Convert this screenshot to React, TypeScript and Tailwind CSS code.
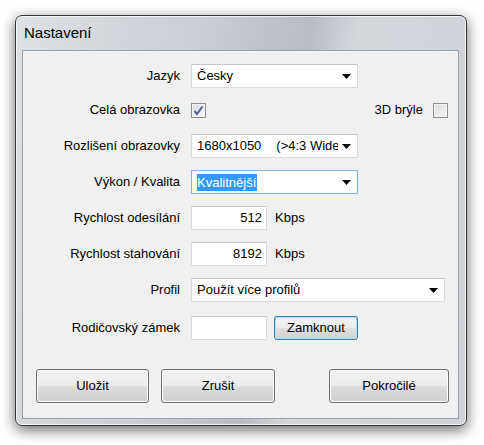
import React from 'react';

const font = { fontFamily: '"Liberation Sans", Arial, sans-serif' };

const Arrow: React.FC = () => (
  <svg width="9" height="5" viewBox="0 0 9 5" className="shrink-0">
    <path d="M0 0 H9 L4.5 5 Z" fill="#000" />
  </svg>
);

const Select: React.FC<{ w: string; focused?: boolean; children: React.ReactNode }> = ({ w, focused, children }) => (
  <div
    className={`${w} h-[24px] flex items-center bg-white border pl-[5px] pr-[6px] ${
      focused ? 'border-[#7eb4ea]' : 'border-[#d9dbdd] border-t-[#c2c6ca]'
    }`}
  >
    <div className="flex-1 overflow-hidden whitespace-nowrap flex items-center mr-[4px]">{children}</div>
    <Arrow />
  </div>
);

const Checkbox: React.FC<{ checked?: boolean }> = ({ checked }) => (
  <div className="w-[15px] h-[15px] border border-[#8f8f8f] bg-[linear-gradient(135deg,#dcdcdc,#f7f7f7)] flex items-center justify-center shadow-[inset_0_0_0_1px_#f4f4f4]">
    {checked && (
      <svg width="11" height="11" viewBox="0 0 11 11">
        <path d="M1.5 6 L4 9 L9.5 1.5" fill="none" stroke="#4a5f97" strokeWidth="2" />
      </svg>
    )}
  </div>
);

const TextBox: React.FC<{ value?: string }> = ({ value }) => (
  <div className="w-[76px] h-[24px] bg-white border border-[#d9dbdd] border-t-[#c2c6ca] flex items-center justify-end pr-[4px]">
    {value}
  </div>
);

const Button: React.FC<{ w: string; children: React.ReactNode }> = ({ w, children }) => (
  <div
    className={`${w} h-[34px] rounded-[3px] border border-[#707070] flex items-center justify-center shadow-[inset_0_0_0_1px_#fcfcfc] bg-[linear-gradient(#f2f2f2_0%,#ebebeb_50%,#dddddd_51%,#cfcfcf_100%)]`}
  >
    {children}
  </div>
);

const Row: React.FC<{ label: string; mt: string; children: React.ReactNode }> = ({ label, mt, children }) => (
  <div className={`flex items-center h-[24px] ${mt}`}>
    <div className="w-[158px] text-right pr-[1px]">{label}</div>
    <div className="ml-[10px] flex items-center flex-1">{children}</div>
  </div>
);

export default function App() {
  return (
    <div className="w-[484px] h-[445px] bg-white pt-[15px] pl-[15px]" style={font}>
      <div className="w-[452px] h-[411px] rounded-[7px] border border-[#34373a] pl-[6px] pr-[7px] pb-[6px] shadow-[0_4px_14px_rgba(0,0,0,0.6),inset_0_0_0_1px_rgba(255,255,255,0.7)] bg-[linear-gradient(100deg,#dde1e5_0%,#c9cfd5_35%,#b7bdc3_57%,#d3d8dd_66%,#cdd3d8_100%)]">
        <div className="h-[34px] flex items-center pl-[2px] pt-[1px] text-[15px] text-black">Nastavení</div>
        <div className="w-[437px] h-[369px] border border-[#98a1a9] bg-[#f0f0f0] text-[13px] text-black pt-[13px]">
          <Row label="Jazyk" mt="">
            <Select w="w-[167px]">Česky</Select>
          </Row>
          <Row label="Celá obrazovka" mt="mt-[10px]">
            <Checkbox checked />
            <div className="ml-auto mr-[10px] flex items-center">
              <span>3D brýle</span>
              <div className="ml-[10px]">
                <Checkbox />
              </div>
            </div>
          </Row>
          <Row label="Rozlišení obrazovky" mt="mt-[12px]">
            <Select w="w-[167px]">
              <span>1680x1050</span>
              <span className="ml-[15px]">(&gt;4:3 Widescreen)</span>
            </Select>
          </Row>
          <Row label="Výkon / Kvalita" mt="mt-[12px]">
            <Select w="w-[167px]" focused>
              <span className="bg-[#3399ff] text-white px-[1px] -ml-[1px] leading-[17px]">Kvalitnější</span>
            </Select>
          </Row>
          <Row label="Rychlost odesílání" mt="mt-[12px]">
            <TextBox value="512" />
            <span className="ml-[8px]">Kbps</span>
          </Row>
          <Row label="Rychlost stahování" mt="mt-[12px]">
            <TextBox value="8192" />
            <span className="ml-[8px]">Kbps</span>
          </Row>
          <Row label="Profil" mt="mt-[12px]">
            <Select w="w-[254px]">Použít více profilů</Select>
          </Row>
          <Row label="Rodičovský zámek" mt="mt-[14px]">
            <TextBox />
            <div className="ml-[7px] w-[84px] h-[24px] rounded-[3px] border border-[#3c7fb1] flex items-center justify-center shadow-[inset_0_0_0_1px_#a8dcf8] bg-[linear-gradient(#f4f4f4_0%,#ececec_50%,#dedede_51%,#d2d2d2_100%)]">
              Zamknout
            </div>
          </Row>
          <div className="flex mt-[29px] pl-[13px] pr-[9px]">
            <Button w="w-[113px]">Uložit</Button>
            <div className="ml-[12px]">
              <Button w="w-[114px]">Zrušit</Button>
            </div>
            <div className="ml-auto">
              <Button w="w-[120px]">Pokročilé</Button>
            </div>
          </div>
        </div>
      </div>
    </div>
  );
}
